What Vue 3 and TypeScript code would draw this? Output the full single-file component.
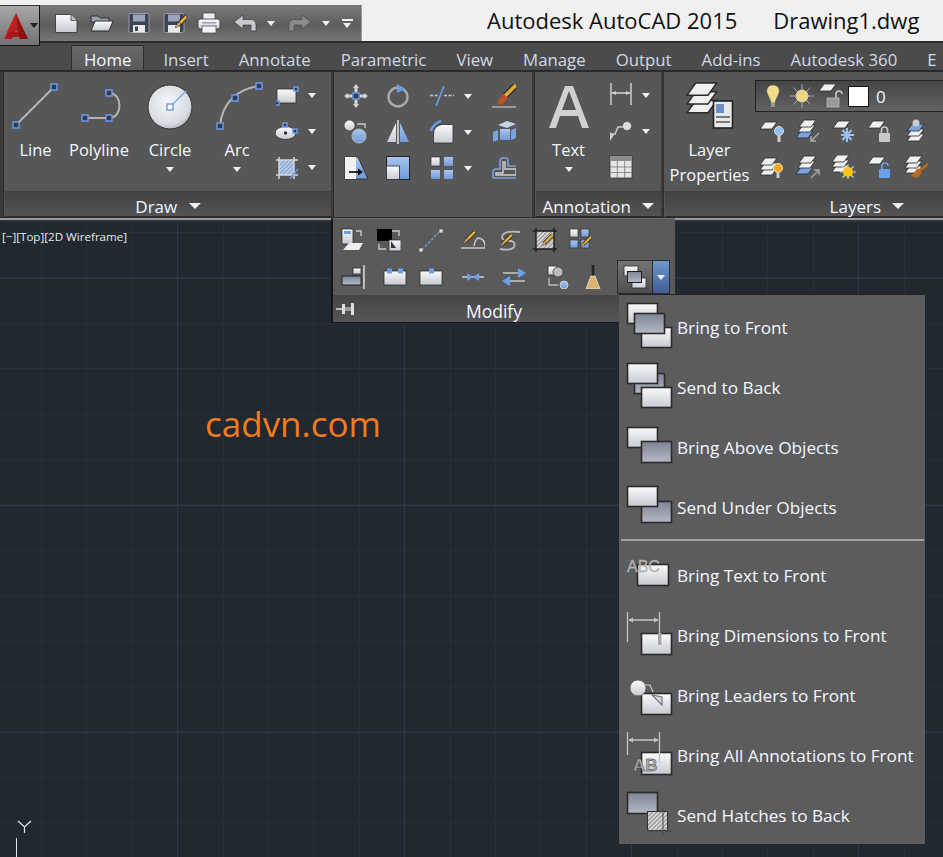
<template>
  <div class="app">
    <svg class="defs" aria-hidden="true">
      <defs>
        <linearGradient id="g-white" x1="0" y1="0" x2="0" y2="1"><stop offset="0" stop-color="#fbfbfb" /><stop offset="1" stop-color="#c6cad2" /></linearGradient>
        <linearGradient id="g-gray" x1="0" y1="0" x2="0" y2="1"><stop offset="0" stop-color="#7d8494" /><stop offset="1" stop-color="#b4b9c4" /></linearGradient>
        <linearGradient id="g-blue" x1="0" y1="0" x2="0" y2="1"><stop offset="0" stop-color="#a9c6ee" /><stop offset="1" stop-color="#6f9ad8" /></linearGradient>
        <linearGradient id="g-red" x1="0" y1="0" x2="1" y2="1"><stop offset="0" stop-color="#e02a26" /><stop offset="1" stop-color="#8e1114" /></linearGradient>
        <radialGradient id="g-disc" cx="0.45" cy="0.4" r="0.65"><stop offset="0" stop-color="#f5f6f8" /><stop offset="0.75" stop-color="#d9dce2" /><stop offset="1" stop-color="#a9adb5" /></radialGradient>
        <pattern id="p-hatch" width="3" height="3" patternUnits="userSpaceOnUse" patternTransform="rotate(45)"><rect width="3" height="3" fill="#e4e4e4" /><rect width="1.4" height="3" fill="#8f8f8f" /></pattern>
        <pattern id="p-hatch-blue" width="3" height="3" patternUnits="userSpaceOnUse" patternTransform="rotate(45)"><rect width="3" height="3" fill="#c3d6f0" /><rect width="1.4" height="3" fill="#7fa0d0" /></pattern>

        <polygon id="pg" points="0,7 12,7 17,0 5,0" />
        <g id="pencil">
          <path d="M21 1 L10 12" class="pen-edge" />
          <path d="M21 1 L10 12" class="pen-body" />
          <path d="M11 9 L13 11 L8 15 L7 14 Z" fill="#d9b27a" stroke="#333" stroke-width=".6" />
        </g>

        <symbol id="i-new" viewBox="0 0 24 24"><path d="M1.5 3.5 H17 L23 9.5 V21.5 H1.5 Z" class="w" /><path d="M17 3.5 V9.5 H23" fill="#bbb" stroke="#333" stroke-width=".7" /></symbol>
        <symbol id="i-open" viewBox="0 0 24 24"><path d="M1 5 H8 L10 7 H19 V11 H1 Z" fill="#9aa0ac" stroke="#2f2f2f" /><path d="M1 20 L5 10 H23 L19 20 Z" fill="url(#g-white)" stroke="#2f2f2f" /></symbol>
        <symbol id="i-save" viewBox="0 0 24 24"><rect x="2" y="2.5" width="20" height="19" rx="1.5" fill="#3c4454" stroke="#aab" stroke-width=".8" /><rect x="6" y="3.5" width="12" height="7" fill="#9aa6bd" /><rect x="6" y="14" width="12" height="7.5" fill="#e9e9e9" /><rect x="8" y="15.5" width="3" height="4.5" fill="#444" /></symbol>
        <symbol id="i-saveas" viewBox="0 0 24 24"><rect x="2" y="2.5" width="20" height="19" rx="1.5" fill="#3c4454" stroke="#aab" stroke-width=".8" /><rect x="6" y="3.5" width="12" height="7" fill="#9aa6bd" /><rect x="6" y="14" width="12" height="7.5" fill="#e9e9e9" /><use href="#pencil" transform="translate(6 2)" /></symbol>
        <symbol id="i-print" viewBox="0 0 24 24"><rect x="6" y="2" width="12" height="8" fill="#eee" stroke="#444" stroke-width=".7" /><rect x="1" y="8" width="22" height="10" rx="2.5" fill="url(#g-white)" stroke="#333" stroke-width=".8" /><rect x="5" y="15" width="14" height="7" fill="#f4f4f4" stroke="#444" stroke-width=".7" /><rect x="5" y="11" width="14" height="1.5" fill="#8ea4c6" /></symbol>
        <symbol id="i-undo" viewBox="0 0 24 24"><path d="M1 11 L10 4 V8.5 H18 Q23 8.5 23 14 V20 H18 V14 H10 V18 Z" fill="#c6c8cc" stroke="#3a3a3a" stroke-width=".7" /></symbol>
        <symbol id="i-redo" viewBox="0 0 24 24"><path d="M23 11 L14 4 V8.5 H6 Q1 8.5 1 14 V20 H6 V14 H14 V18 Z" fill="#8a8a8a" stroke="#4a4a4a" stroke-width=".7" /></symbol>

        <symbol id="d-rect" viewBox="0 0 24 24"><rect x="1" y="6" width="19" height="14" class="w" /><rect x="18" y="4" width="4" height="4" class="nd" /><rect x="-1" y="18" width="4" height="4" class="nd" /></symbol>
        <symbol id="d-ellipse" viewBox="0 0 24 24"><ellipse cx="9.5" cy="14" rx="10.5" ry="6.5" class="w" /><circle cx="9.5" cy="14" r="1.7" fill="#333" /><rect x="7" y="4" width="4" height="4" class="nd" /><rect x="17" y="10" width="4" height="4" class="nd" /></symbol>
        <symbol id="d-hatch" viewBox="0 0 24 24"><rect x="3" y="5" width="15" height="15" fill="url(#p-hatch-blue)" /><path d="M0 5 H22 M0 20 H22 M3 2 V24 M18 2 V24" stroke="#d6d6d6" stroke-width="1.5" fill="none" /><path d="M14 24 L22 14" stroke="#6a9be8" stroke-width="1.4" /></symbol>

        <symbol id="m-move" viewBox="0 0 24 24"><path d="M12 0 L15 4 H13.5 V8 H10.5 V4 H9 Z M12 24 L15 20 H13.5 V16 H10.5 V20 H9 Z M0 12 L4 9 V10.5 H8 V13.5 H4 V15 Z M24 12 L20 9 V10.5 H16 V13.5 H20 V15 Z" fill="#d5d5d5" /><rect x="9" y="9" width="6" height="6" class="nd" /></symbol>
        <symbol id="m-rotate" viewBox="0 0 24 24"><circle cx="12" cy="13" r="9.5" fill="none" stroke="#a9a9a9" stroke-width="2.4" /><path d="M11 0 L19 5 L11 9 Z" fill="#6aa0ea" /></symbol>
        <symbol id="m-trim" viewBox="0 0 24 24"><path d="M0 11.5 H8 M14 11.5 H24" stroke="#b9c4d6" stroke-width="1.4" stroke-dasharray="3 1.5" /><path d="M6 22 L14 2" stroke="#6a9be8" stroke-width="1.8" /></symbol>
        <symbol id="m-brush" viewBox="0 0 24 24"><path d="M0 23 H24" stroke="#ddd" stroke-width="1" /><path d="M24 1 L13 12" stroke="#2d2d2d" stroke-width="6" /><path d="M24 1 L13 12" stroke="#e4ac2e" stroke-width="3.6" /><path d="M11 10 L16 14 L10 21 L5 19 Z" fill="#c0511f" /></symbol>
        <symbol id="m-copy" viewBox="0 0 24 24"><circle cx="5.5" cy="5.5" r="5" fill="url(#g-white)" /><circle cx="15" cy="16" r="7" fill="url(#g-blue)" stroke="#bbb" /><path d="M13 4 H21 V8" fill="none" stroke="#ccc" stroke-width="1.3" /></symbol>
        <symbol id="m-mirror" viewBox="0 0 24 24"><polygon points="10,3 10,22 1,22" fill="url(#g-white)" /><polygon points="14,3 14,22 23,22" fill="url(#g-blue)" /><path d="M12 0 V24" stroke="#ddd" stroke-width="1.6" /></symbol>
        <symbol id="m-fillet" viewBox="0 0 24 24"><path d="M3.5 23 V14 Q3.5 6 12 4.5 H23 V23 Z" class="w" /><path d="M1 11 Q3 4 11 1" fill="none" stroke="#6aa0ea" stroke-width="2.4" /></symbol>
        <symbol id="m-explode" viewBox="0 0 24 24"><polygon points="1,12 6,10 6,20 1,22" fill="#7aa3dc" /><polygon points="6,5 15,1 24,4 15,8" fill="#c7d6ec" /><rect x="8" y="9" width="10" height="11" fill="url(#g-blue)" /><polygon points="19,10 24,8 24,18 19,20" fill="#7aa3dc" /></symbol>
        <symbol id="m-stretch" viewBox="0 0 24 24"><polygon points="1,1 14,1 24,23 1,23" fill="url(#g-blue)" stroke="#222" stroke-width=".8" /><rect x="1" y="1" width="11" height="22" fill="#f2f2f2" /><path d="M5 16 H16" stroke="#000" stroke-width="1.6" /><path d="M14 12.5 L19 16 L14 19.5 Z" fill="#000" /></symbol>
        <symbol id="m-scale" viewBox="0 0 24 24"><rect x="0.5" y="0.5" width="23" height="23" fill="url(#g-blue)" stroke="#222" /><rect x="0.5" y="10" width="13" height="13.5" class="w" /></symbol>
        <symbol id="m-array" viewBox="0 0 24 24"><rect x="1" y="1" width="9" height="9" fill="url(#g-white)" stroke="#333" stroke-width=".7" /><rect x="14" y="1" width="9" height="9" fill="url(#g-blue)" /><rect x="1" y="14" width="9" height="9" fill="url(#g-blue)" /><rect x="14" y="14" width="9" height="9" fill="url(#g-blue)" /></symbol>
        <symbol id="m-offset" viewBox="0 0 24 24"><path d="M1 22 V16 Q1 13 4 13 H8 V5 Q8 2 11 2 H14 Q16 2 16 5 V10 H24 M1 22 H24" fill="none" stroke="#7aa3dc" stroke-width="1.6" /><path d="M4 19 V17 H11 V6 H13 V13 H24 V19 Z" fill="none" stroke="#d0d0d0" stroke-width="1.4" /></symbol>

        <symbol id="x-edit" viewBox="0 0 24 24"><rect x="1" y="1" width="11" height="15" class="w" /><rect x="3" y="3" width="7" height="3" fill="#6aa0ea" /><polygon points="2,22 8,15 22,15 18,22" fill="#eee" /><path d="M15 3 H20 V8" fill="none" stroke="#ccc" stroke-width="1.3" /></symbol>
        <symbol id="x-match" viewBox="0 0 24 24"><rect x="0" y="1" width="15" height="12" fill="#000" /><rect x="12" y="12" width="12" height="11" class="w" /><path d="M14 13 L19 20 H14 Z" fill="#333" /><path d="M15 3 H22 V8 M2 16 V21 H9" fill="none" stroke="#ccc" stroke-width="1.3" /></symbol>
        <symbol id="x-line" viewBox="0 0 24 24"><path d="M3 22 L21 3" stroke="#6a9be8" stroke-width="1.4" stroke-dasharray="3 1.5" /><rect x="0" y="20" width="4" height="4" fill="#ddd" stroke="#444" stroke-width=".6" /><rect x="20" y="1" width="4" height="4" fill="#ddd" stroke="#444" stroke-width=".6" /></symbol>
        <symbol id="x-cloud" viewBox="0 0 24 24"><path d="M2 20 H24 Q25 11 17 10 Q14 12 13 18 M2 20 H0" fill="none" stroke="#c8c8c8" stroke-width="1.5" /><use href="#pencil" transform="translate(-3 3) scale(.8)" /></symbol>
        <symbol id="x-spline" viewBox="0 0 24 24"><path d="M23 4 Q6 2 5 9 Q5 13 14 13 Q19 14 17 19 Q14 23 3 21" fill="none" stroke="#b9b9b9" stroke-width="1.8" /><use href="#pencil" transform="translate(-2 6) scale(.8)" /></symbol>
        <symbol id="x-hatch" viewBox="0 0 24 24"><rect x="3" y="3" width="18" height="18" fill="url(#p-hatch)" /><path d="M0 3 H24 M0 21 H24 M3 0 V24 M21 0 V24" stroke="#1b1b1b" stroke-width="1.4" /><use href="#pencil" transform="translate(3 6) scale(.8)" /></symbol>
        <symbol id="x-array" viewBox="0 0 24 24"><rect x="1" y="1" width="8" height="8" fill="url(#g-white)" stroke="#333" stroke-width=".7" /><rect x="12" y="1" width="8" height="8" fill="url(#g-blue)" stroke="#333" stroke-width=".7" /><rect x="1" y="12" width="8" height="8" fill="url(#g-blue)" stroke="#333" stroke-width=".7" /><rect x="12" y="12" width="8" height="8" fill="url(#g-blue)" stroke="#333" stroke-width=".7" /><use href="#pencil" transform="translate(7 8) scale(.72)" /></symbol>
        <symbol id="x-align" viewBox="0 0 24 24"><rect x="12" y="3" width="8" height="6" class="w" /><rect x="1" y="11" width="19" height="9" fill="url(#g-gray)" stroke="#222" stroke-width="1" /><path d="M23 0 V24" stroke="#eee" stroke-width="1.3" /></symbol>
        <symbol id="x-break2" viewBox="0 0 24 24"><rect x="1" y="6" width="22" height="14" class="w" /><rect x="4" y="3.5" width="5" height="5" fill="#6aa0ea" /><rect x="15" y="3.5" width="5" height="5" fill="#6aa0ea" /></symbol>
        <symbol id="x-break1" viewBox="0 0 24 24"><rect x="1" y="6" width="22" height="14" class="w" /><rect x="10" y="3.5" width="5" height="5" fill="#6aa0ea" /></symbol>
        <symbol id="x-join" viewBox="0 0 24 24"><path d="M1 12 H23" stroke="#c8c8c8" stroke-width="1.6" /><path d="M6 8 L12 12 L6 16 Z M18 8 L12 12 L18 16 Z" fill="#6aa0ea" /></symbol>
        <symbol id="x-swap" viewBox="0 0 24 24"><path d="M1 8 H18 M23 16 H6" stroke="#c8c8c8" stroke-width="1.6" /><path d="M16 3 L24 8 L16 13 Z M8 11 L0 16 L8 21 Z" fill="#6aa0ea" /></symbol>
        <symbol id="x-order" viewBox="0 0 24 24"><rect x="3" y="1" width="9" height="9" class="w" /><circle cx="13" cy="7" r="5" fill="#bbb" stroke="#333" stroke-width=".7" /><circle cx="19" cy="20" r="4" fill="url(#g-blue)" stroke="#ddd" stroke-width=".8" /><path d="M4 13 V20 H13" fill="none" stroke="#bbb" stroke-width="1.3" /></symbol>
        <symbol id="x-broom" viewBox="0 0 24 24"><path d="M12 0 V12" stroke="#222" stroke-width="2.6" /><path d="M10 11 H14 L19 24 H5 Z" fill="#dcb36a" stroke="#e8e8e8" stroke-width=".8" /></symbol>
        <symbol id="x-order-btn" viewBox="0 0 24 24"><rect x="1" y="1" width="14" height="10" class="w" /><rect x="9" y="13" width="14" height="10" class="w" /><rect x="4.5" y="6.5" width="14" height="11" fill="url(#g-gray)" stroke="#222" /></symbol>

        <symbol id="a-dim" viewBox="0 0 24 24"><path d="M2 0 V22 M22 0 V22 M3 10 H21" fill="none" stroke="#d5d5d5" stroke-width="1.4" /><path d="M3 10 L7 8 V12 Z M21 10 L17 8 V12 Z" fill="#d5d5d5" /></symbol>
        <symbol id="a-leader" viewBox="0 0 24 24"><circle cx="18" cy="7" r="4.5" fill="#ddd" stroke="#444" stroke-width=".6" /><path d="M14 8 H9 L6 15 H3" fill="none" stroke="#ccc" stroke-width="1.6" /><path d="M1 13 L5 16 L1 22 Z" fill="#ccc" /></symbol>
        <symbol id="a-table" viewBox="0 0 24 24"><rect x="1" y="1" width="22" height="22" fill="#e6e6e6" stroke="#333" stroke-width=".8" /><rect x="1" y="1" width="22" height="5" fill="#8c8c8c" /><path d="M8.3 6 V23 M15.7 6 V23 M1 12 H23 M1 17.5 H23" stroke="#777" stroke-width=".8" /></symbol>

        <symbol id="l-bulb" viewBox="0 0 24 24"><path d="M12 1 C7 1 5 5 6 9 C7 12 9.500 15 10 19 H14 C14.500 15 17 12 18 9 C19 5 17 1 12 1 Z" fill="#f3dc8c" stroke="#555" stroke-width=".6" /><rect x="10" y="19" width="4" height="4" fill="#999" /></symbol>
        <symbol id="l-sun" viewBox="0 0 24 24"><path d="M12 0 V24 M0 12 H24 M3.5 3.5 L20.5 20.5 M20.5 3.5 L3.5 20.5" stroke="#aaa" stroke-width="1" /><circle cx="12" cy="12" r="6" fill="#f0d67a" stroke="#d5d5d5" /></symbol>
        <symbol id="l-unlock" viewBox="0 0 24 24"><use href="#pg" class="sheet" x="0" y="0" /><rect x="8" y="14" width="12" height="9" fill="#9a9a9a" stroke="#ccc" stroke-width=".6" /><path d="M17 14 V10 Q17 7 20 7 Q23 7 23 10" fill="none" stroke="#c8c8c8" stroke-width="1.6" /></symbol>

        <g id="stack"><use href="#pg" class="sheet" y="10" /><use href="#pg" class="sheet" y="5" /><use href="#pg" class="sheet" y="0" /></g>
        <symbol id="l-iso" viewBox="0 0 24 24"><use href="#pg" class="sheet" x="0" y="3" /><circle cx="19" cy="12" r="4.5" fill="#8ec0f4" stroke="#ddd" /><rect x="17.5" y="16" width="3" height="7" fill="#ccc" /></symbol>
        <symbol id="l-down" viewBox="0 0 24 24"><use href="#pg" class="bsheet" x="0" y="12" /><use href="#pg" class="sheet" x="2" y="6" /><use href="#pg" class="sheet" x="3" y="1" /><path d="M23 14 L15 22 M15 17 V22 H20" fill="none" stroke="#aaa" stroke-width="1.4" /></symbol>
        <symbol id="l-freeze" viewBox="0 0 24 24"><use href="#pg" class="sheet" x="1" y="2" /><path d="M15 9 V23 M9 16 H22 M10.5 11 L19.5 21 M19.5 11 L10.5 21" stroke="#9ac0f0" stroke-width="2" /></symbol>
        <symbol id="l-lock" viewBox="0 0 24 24"><use href="#pg" class="sheet" x="0" y="2" /><rect x="11" y="14" width="11" height="9" rx="1" fill="#c8c8c8" /><path d="M13.5 14 V11 Q13.5 8 16.5 8 Q19.5 8 19.5 11 V14" fill="none" stroke="#c8c8c8" stroke-width="1.6" /></symbol>
        <symbol id="l-ball" viewBox="0 0 24 24"><use href="#pg" class="sheet" x="3" y="15" /><use href="#pg" class="sheet" x="3" y="10" /><use href="#pg" class="bsheet" x="3" y="5" /><circle cx="12" cy="4" r="3.5" fill="#ccc" /></symbol>
        <symbol id="l-iso2" viewBox="0 0 24 24"><use href="#stack" transform="translate(0 3)" /><circle cx="18" cy="13" r="4.5" fill="#f2a623" stroke="#ffdf9a" /><rect x="16.5" y="17" width="3" height="6" fill="#ccc" /></symbol>
        <symbol id="l-up" viewBox="0 0 24 24"><use href="#pg" class="bsheet" x="0" y="12" /><use href="#pg" class="sheet" x="2" y="6" /><use href="#pg" class="sheet" x="3" y="1" /><path d="M15 23 L23 15 M18 15 H23 V20" fill="none" stroke="#aaa" stroke-width="1.4" /></symbol>
        <symbol id="l-thaw" viewBox="0 0 24 24"><use href="#stack" /><path d="M16 9 V25 M8 17 H24 M10.5 11.5 L21.5 22.5 M21.5 11.5 L10.5 22.5" stroke="#cfcfcf" stroke-width="1.2" /><circle cx="16" cy="17" r="5" fill="#f6c612" /></symbol>
        <symbol id="l-unlock2" viewBox="0 0 24 24"><use href="#pg" class="sheet" x="0" y="2" /><rect x="11" y="14" width="11" height="9" rx="1" fill="#6aa0ea" /><path d="M14 14 V11 Q14 8 17 8 Q20 8 20 11" fill="none" stroke="#6aa0ea" stroke-width="1.6" /></symbol>
        <symbol id="l-merge" viewBox="0 0 24 24"><use href="#stack" transform="translate(1 1)" /><path d="M24 9 L14 17" stroke="#b9691f" stroke-width="2.6" /><path d="M14 13 L18 18 L13 23 L7 21 Z" fill="#b9691f" /></symbol>
      </defs>
    </svg>

    <header class="titlebar">
      <div class="qat">
        <svg class="ic"><use href="#i-new" /></svg>
        <svg class="ic"><use href="#i-open" /></svg>
        <svg class="ic"><use href="#i-save" /></svg>
        <svg class="ic"><use href="#i-saveas" /></svg>
        <svg class="ic"><use href="#i-print" /></svg>
        <svg class="ic"><use href="#i-undo" /></svg>
        <i class="caret"></i>
        <svg class="ic"><use href="#i-redo" /></svg>
        <i class="caret"></i>
        <span class="custom"><i class="caret"></i></span>
      </div>
      <span class="app-name">Autodesk AutoCAD 2015</span>
      <span class="doc-name">Drawing1.dwg</span>
      <button class="app-btn">
        <svg width="26" height="28" viewBox="0 0 26 28">
          <polygon points="13,1 25,27 17,27 13,18 9,27 1,27" fill="url(#g-red)" />
          <polygon points="13,1 9,16 1,27" fill="#c41f1f" />
          <polygon points="6,20 20,20 22,25 4,25" fill="#a81518" />
          <polygon points="13,1 18,14 25,27 17,27" fill="#7e1013" opacity=".75" />
        </svg>
        <i class="caret dark"></i>
      </button>
    </header>

    <nav class="tabs">
      <a v-for="t in tabs" :key="t" class="tab" :class="{ active: t === 'Home' }">{{ t }}</a>
    </nav>

    <section class="ribbon">
      <div class="panel draw">
        <div class="body draw-body">
          <div class="big">
            <svg class="big-ic" viewBox="0 0 48 48"><path d="M4 42 L42 4" stroke="#b5b5b5" stroke-width="2" /><rect x="1" y="39" width="6" height="6" class="nd" /><rect x="39" y="1" width="6" height="6" class="nd" /></svg>
            <span class="lbl">Line</span>
          </div>
          <div class="big">
            <svg class="big-ic" viewBox="0 0 48 48"><path d="M10 35 H34 C48 35 48 10 34 10" fill="none" stroke="#b5b5b5" stroke-width="2" /><rect x="7" y="32" width="6" height="6" class="nd" /><rect x="31" y="32" width="6" height="6" class="nd" /><rect x="31" y="7" width="6" height="6" class="nd" /></svg>
            <span class="lbl">Polyline</span>
          </div>
          <div class="big">
            <svg class="big-ic" viewBox="0 0 48 48"><circle cx="24" cy="24" r="22" fill="url(#g-disc)" stroke="#333" stroke-width="1" /><path d="M24 24 L40 8" stroke="#7eb0f0" stroke-width="1.6" /><rect x="21" y="21" width="6" height="6" fill="#fff" stroke="#6a9be8" stroke-width="1.4" /></svg>
            <span class="lbl">Circle</span>
            <i class="caret"></i>
          </div>
          <div class="big">
            <svg class="big-ic" viewBox="0 0 48 48"><path d="M7 43 C9 20 24 6 46 3" fill="none" stroke="#b5b5b5" stroke-width="2" /><rect x="4" y="40" width="6" height="6" class="nd" /><rect x="19" y="12" width="6" height="6" class="nd" /><rect x="43" y="0" width="6" height="6" class="nd" /></svg>
            <span class="lbl">Arc</span>
            <i class="caret"></i>
          </div>
          <div class="small-col">
            <div class="small"><svg class="ic"><use href="#d-rect" /></svg><i class="caret"></i></div>
            <div class="small"><svg class="ic"><use href="#d-ellipse" /></svg><i class="caret"></i></div>
            <div class="small"><svg class="ic"><use href="#d-hatch" /></svg><i class="caret"></i></div>
          </div>
        </div>
        <footer class="foot">Draw <i class="caret big-caret"></i></footer>
      </div>

      <div class="panel modify">
        <div class="body modify-body">
          <svg class="ic"><use href="#m-move" /></svg>
          <svg class="ic"><use href="#m-rotate" /></svg>
          <div class="small"><svg class="ic"><use href="#m-trim" /></svg><i class="caret"></i></div>
          <svg class="ic"><use href="#m-brush" /></svg>
          <svg class="ic"><use href="#m-copy" /></svg>
          <svg class="ic"><use href="#m-mirror" /></svg>
          <div class="small"><svg class="ic"><use href="#m-fillet" /></svg><i class="caret"></i></div>
          <svg class="ic"><use href="#m-explode" /></svg>
          <svg class="ic"><use href="#m-stretch" /></svg>
          <svg class="ic"><use href="#m-scale" /></svg>
          <div class="small"><svg class="ic"><use href="#m-array" /></svg><i class="caret"></i></div>
          <svg class="ic"><use href="#m-offset" /></svg>
        </div>
      </div>

      <div class="panel annotation">
        <div class="body annotation-body">
          <div class="big">
            <svg class="big-ic" viewBox="0 0 48 48"><path d="M20 3 H28 L44 45 H37 L33 33 H15 L11 45 H4 Z M17 27 H31 L24 8 Z" fill="#d0d0d0" fill-rule="evenodd" /></svg>
            <span class="lbl">Text</span>
            <i class="caret"></i>
          </div>
          <div class="small-col">
            <div class="small"><svg class="ic"><use href="#a-dim" /></svg><i class="caret"></i></div>
            <div class="small"><svg class="ic"><use href="#a-leader" /></svg><i class="caret"></i></div>
            <div class="small"><svg class="ic"><use href="#a-table" /></svg></div>
          </div>
        </div>
        <footer class="foot">Annotation <i class="caret big-caret"></i></footer>
      </div>

      <div class="panel layers">
        <div class="body layers-body">
          <div class="big">
            <svg class="big-ic" viewBox="0 0 48 48">
              <g transform="translate(1 0) scale(1.75)"><use href="#pg" class="sheet" y="10" /><use href="#pg" class="sheet" y="5" /><use href="#pg" class="sheet" y="0" /></g>
              <rect x="27.5" y="18" width="19" height="27" fill="#e8e8e8" stroke="#222" stroke-width="1.6" />
              <rect x="30" y="21" width="8" height="9" fill="#6a8fc8" />
              <path d="M30 34 H44 M30 39 H44" stroke="#555" stroke-width="1.4" />
            </svg>
            <span class="lbl two">Layer<br />Properties</span>
          </div>
          <div class="layer-tools">
            <div class="combo">
              <svg class="ic"><use href="#l-bulb" /></svg>
              <svg class="ic"><use href="#l-sun" /></svg>
              <svg class="ic"><use href="#l-unlock" /></svg>
              <span class="swatch"></span>
              <span class="combo-val">0</span>
            </div>
            <div class="layer-row">
              <svg class="ic"><use href="#l-iso" /></svg>
              <svg class="ic"><use href="#l-down" /></svg>
              <svg class="ic"><use href="#l-freeze" /></svg>
              <svg class="ic"><use href="#l-lock" /></svg>
              <svg class="ic"><use href="#l-ball" /></svg>
            </div>
            <div class="layer-row">
              <svg class="ic"><use href="#l-iso2" /></svg>
              <svg class="ic"><use href="#l-up" /></svg>
              <svg class="ic"><use href="#l-thaw" /></svg>
              <svg class="ic"><use href="#l-unlock2" /></svg>
              <svg class="ic"><use href="#l-merge" /></svg>
            </div>
          </div>
        </div>
        <footer class="foot">Layers <i class="caret big-caret"></i></footer>
      </div>
    </section>

    <div class="divider"></div>

    <main class="canvas">
      <span class="vp-label">[−][Top][2D Wireframe]</span>
      <span class="watermark">cadvn.com</span>
      <svg class="ucs" width="24" height="44" viewBox="0 0 24 44">
        <path d="M2 8 L8.500 14 L15 8 M8.500 14 V20" fill="none" stroke="#e6e6e6" stroke-width="1.200" />
        <path d="M0.500 25 V44" stroke="#e6e6e6" stroke-width="1" />
      </svg>
    </main>

    <div class="slideout">
      <div class="slide-grid">
        <svg class="ic"><use href="#x-edit" /></svg>
        <svg class="ic"><use href="#x-match" /></svg>
        <svg class="ic"><use href="#x-line" /></svg>
        <svg class="ic"><use href="#x-cloud" /></svg>
        <svg class="ic"><use href="#x-spline" /></svg>
        <svg class="ic"><use href="#x-hatch" /></svg>
        <svg class="ic"><use href="#x-array" /></svg>
      </div>
      <div class="slide-row">
        <svg class="ic"><use href="#x-align" /></svg>
        <svg class="ic"><use href="#x-break2" /></svg>
        <svg class="ic"><use href="#x-break1" /></svg>
        <svg class="ic"><use href="#x-join" /></svg>
        <svg class="ic"><use href="#x-swap" /></svg>
        <svg class="ic"><use href="#x-order" /></svg>
        <svg class="ic"><use href="#x-broom" /></svg>
        <div class="split">
          <span class="split-main"><svg class="ic"><use href="#x-order-btn" /></svg></span>
          <span class="split-arrow"><i class="caret"></i></span>
        </div>
      </div>
      <footer class="slide-foot">
        <svg class="pin" width="20" height="14" viewBox="0 0 20 14"><path d="M0 7 H6" stroke="#ddd" stroke-width="1.6" /><rect x="6" y="2" width="3" height="10" fill="#ddd" /><rect x="9" y="5" width="6" height="4" fill="#999" /><rect x="15" y="1" width="3" height="12" fill="#ddd" /></svg>
        <span>Modify</span>
      </footer>
    </div>

    <div class="menu">
      <div class="menu-item">
        <svg class="menu-ic" viewBox="0 0 46 50"><rect x="1.500" y="0.500" width="30" height="20" class="s-w" /><rect x="15.500" y="24.500" width="30" height="20" class="s-w" /><rect x="8.500" y="10.500" width="30" height="20" class="s-g" /></svg>
        <span>Bring to Front</span>
      </div>
      <div class="menu-item">
        <svg class="menu-ic" viewBox="0 0 46 50"><rect x="8.500" y="10.500" width="30" height="20" class="s-g" /><rect x="1.500" y="0.500" width="30" height="20" class="s-w" /><rect x="15.500" y="24.500" width="30" height="20" class="s-w" /></svg>
        <span>Send to Back</span>
      </div>
      <div class="menu-item">
        <svg class="menu-ic" viewBox="0 0 46 50"><rect x="1.500" y="4.500" width="30" height="20" class="s-w" /><rect x="15.500" y="18.500" width="30" height="21" class="s-g" /></svg>
        <span>Bring Above Objects</span>
      </div>
      <div class="menu-item">
        <svg class="menu-ic" viewBox="0 0 46 50"><rect x="15.500" y="18.500" width="30" height="21" class="s-g" /><rect x="1.500" y="3.500" width="30" height="20" class="s-w" /></svg>
        <span>Send Under Objects</span>
      </div>
      <div class="menu-sep"></div>
      <div class="menu-item">
        <svg class="menu-ic" viewBox="0 0 46 50"><rect x="11.500" y="13.500" width="31" height="21" class="s-w" /><text x="1" y="21" class="ic-text abc">ABC</text></svg>
        <span>Bring Text to Front</span>
      </div>
      <div class="menu-item">
        <svg class="menu-ic" viewBox="0 0 46 50"><rect x="15.500" y="22.500" width="30" height="21" class="s-w" /><path d="M1.500 1 V31 M33.500 1 V32 M3 9 H32" fill="none" stroke="#c4c4c4" stroke-width="1.300" /><path d="M2.500 9 L7 6.500 V11.500 Z M32.500 9 L28 6.500 V11.500 Z" fill="#c4c4c4" /><rect x="32" y="22" width="3.500" height="12" fill="#a8a8a8" /></svg>
        <span>Bring Dimensions to Front</span>
      </div>
      <div class="menu-item">
        <svg class="menu-ic" viewBox="0 0 46 50"><rect x="15.500" y="22.500" width="30" height="21" class="s-w" /><circle cx="12" cy="17" r="8" fill="url(#g-white)" stroke="#6a6a6a" /><path d="M19 14 H24 L27 21" fill="none" stroke="#ccc" stroke-width="1.200" /><polygon points="26,24 36,26 36,34" fill="#d5d8de" stroke="#777" stroke-width="1.200" /></svg>
        <span>Bring Leaders to Front</span>
      </div>
      <div class="menu-item">
        <svg class="menu-ic" viewBox="0 0 46 50"><rect x="15.500" y="21.500" width="30" height="22" class="s-w" /><path d="M1.500 1 V24 M33.500 1 V32 M3 9 H32" fill="none" stroke="#c4c4c4" stroke-width="1.300" /><path d="M2.500 9 L7 6.500 V11.500 Z M32.500 9 L28 6.500 V11.500 Z" fill="#c4c4c4" /><text x="7" y="40" class="ic-text ab">AB</text></svg>
        <span>Bring All Annotations to Front</span>
      </div>
      <div class="menu-item">
        <svg class="menu-ic" viewBox="0 0 46 50"><rect x="1.500" y="1.500" width="30" height="21" class="s-g flip" /><rect x="21.500" y="20.500" width="20" height="19" fill="url(#p-hatch)" stroke="#333" /><path d="M37 17 V44 M24 40 H46" stroke="#4a4a4a" stroke-width="1" /></svg>
        <span>Send Hatches to Back</span>
      </div>
    </div>
  </div>
</template>

<script setup lang="ts">
const tabs: string[] = ['Home', 'Insert', 'Annotate', 'Parametric', 'View', 'Manage', 'Output', 'Add-ins', 'Autodesk 360', 'E']
</script>

<style>
html,
body {
  margin: 0;
  background: #212830;
}
</style>

<style scoped>
.app {
  position: relative;
  display: flex;
  flex-direction: column;
  width: 943px;
  height: 857px;
  overflow: hidden;
  font-family: 'Open Sans', 'Noto Sans', sans-serif;
  color: #f2f7ff;
  background: #212830;
}

.defs {
  position: absolute;
  width: 0;
  height: 0;
}

.ic {
  display: block;
  width: 24px;
  height: 24px;
  flex: none;
  overflow: visible;
}

.caret {
  display: block;
  flex: none;
  width: 0;
  height: 0;
  border-left: 4px solid transparent;
  border-right: 4px solid transparent;
  border-top: 5px solid #f0f0f0;
}

.caret.dark {
  border-top-color: #222;
}

.big-caret {
  display: inline-block;
  border-left-width: 6px;
  border-right-width: 6px;
  border-top-width: 6px;
  margin-left: 7px;
  vertical-align: 4px;
}

/* title bar */
.titlebar {
  position: relative;
  flex: none;
  display: flex;
  height: 41px;
  background: #f0f0f0;
  color: #111;
  font-size: 22px;
  line-height: 41px;
}

.qat {
  display: grid;
  grid-template-columns: 36px 37px 35px 35px 36px 34px 21px 34px 20px 12px;
  align-items: center;
  box-sizing: border-box;
  width: 362px;
  height: 36px;
  margin-top: 5px;
  padding-left: 54px;
  background: linear-gradient(#7a7a7a, #5d5d5d 55%, #777);
  border-right: 1px solid #9a9a9a;
}

.custom {
  display: block;
  width: 10px;
  border-top: 2px solid #eee;
  padding: 2px 0 0 1px;
}

.app-name {
  margin-left: 125px;
  white-space: nowrap;
}

.doc-name {
  margin-left: 36px;
  white-space: nowrap;
}

.app-btn {
  position: absolute;
  left: 0;
  top: 5px;
  display: flex;
  align-items: center;
  gap: 1px;
  box-sizing: border-box;
  width: 40px;
  height: 41px;
  padding: 0 0 0 3px;
  border: 0;
  border-right: 1px solid #111;
  border-bottom: 1px solid #111;
  border-top: 1px solid #333;
  background: linear-gradient(#a8a8a8, #707070);
  z-index: 2;
}

/* tabs */
.tabs {
  flex: none;
  display: flex;
  align-items: flex-end;
  gap: 30px;
  height: 27px;
  padding-left: 71px;
  white-space: nowrap;
  background: #4b4b4b;
  border-top: 2px solid #2b2b2b;
  border-bottom: 2px solid #2a2a2a;
  font-size: 16.800px;
  color: #cfd9e6;
}

.tab {
  height: 24px;
  line-height: 27px;
}

.tab.active {
  color: #f4f8ff;
  background: linear-gradient(#686868, #5a5a5a);
  padding: 0 12px 0 12px;
  margin-right: -11px;
  border: 1px solid #2d2d2d;
  border-bottom: 0;
  border-radius: 2px 2px 0 0;
}

/* ribbon */
.ribbon {
  flex: none;
  display: flex;
  gap: 2px;
  height: 145px;
  padding-left: 3px;
  background: #3b3b3b;
}

.panel {
  flex: none;
  display: flex;
  flex-direction: column;
  background: #575757;
  border-left: 1px solid #2c2c2c;
  box-sizing: border-box;
}

.body {
  flex: 1;
  min-height: 0;
}

.foot {
  flex: none;
  box-sizing: border-box;
  height: 26px;
  margin-left: 1px;
  padding-top: 3px;
  text-align: center;
  font-size: 17px;
  line-height: 26px;
  background: linear-gradient(#414141, #545454);
  border-bottom: 1px solid #2c2c2c;
}

.big {
  flex: none;
  display: flex;
  flex-direction: column;
  align-items: center;
  padding-top: 11px;
}

.big-ic {
  display: block;
  width: 48px;
  height: 48px;
  overflow: visible;
}

.lbl {
  margin-top: 6px;
  margin-bottom: 5px;
  font-size: 16.500px;
  line-height: 25px;
  white-space: nowrap;
}

.small-col {
  padding-top: 5px;
}

.small {
  display: flex;
  align-items: center;
  height: 36px;
}

.draw {
  width: 328px;
}

.draw-body {
  display: grid;
  grid-template-columns: 63px 64px 78px 56px auto;
}

.draw-body .small-col {
  padding-left: 11px;
}

.draw-body .small .caret {
  margin-left: 8px;
}

.modify {
  width: 199px;
}

.modify-body {
  display: grid;
  grid-template-columns: 42px 44px 62px 24px;
  grid-auto-rows: 36px;
  align-items: center;
  padding: 6px 0 0 10px;
}

.modify-body .caret {
  margin-left: 10px;
}

.annotation {
  width: 127px;
}

.annotation-body {
  display: flex;
}

.annotation-body .big {
  width: 67px;
}

.annotation-body .small-col {
  padding-left: 7px;
}

.annotation-body .small .caret {
  margin-left: 9px;
}

.layers {
  width: 406px;
}

.layers-body {
  display: flex;
}

.layers-body .big {
  width: 91px;
}

.lbl.two {
  text-align: center;
}

.layer-tools {
  flex: none;
  padding-top: 8px;
}

.combo {
  display: flex;
  align-items: center;
  gap: 5px;
  box-sizing: border-box;
  width: 315px;
  height: 32px;
  padding-left: 5px;
  border: 1px solid #222;
  background: linear-gradient(#454545, #626262);
  font-size: 17px;
}

.swatch {
  width: 21px;
  height: 21px;
  background: #fff;
  border: 1px solid #111;
  box-sizing: border-box;
}

.combo-val {
  margin-left: 2px;
}

.layer-row {
  display: flex;
  gap: 12px;
  padding-left: 5px;
  margin-top: 7px;
}

.layer-row + .layer-row {
  margin-top: 12px;
}

.divider {
  flex: none;
  height: 5px;
  box-sizing: border-box;
  border-top: 1px solid #2b2b2b;
  border-bottom: 2px solid #2e333a;
  background: #9a9a9a;
}

/* model space */
.canvas {
  position: relative;
  flex: 1;
  background-color: #212830;
  background-image:
    repeating-linear-gradient(90deg, #2f3748 0 1px, transparent 1px 227px),
    repeating-linear-gradient(180deg, #2f3748 0 1px, transparent 1px 227px),
    repeating-linear-gradient(90deg, #282f3a 0 1px, transparent 1px 45.400px),
    repeating-linear-gradient(180deg, #282f3a 0 1px, transparent 1px 45.400px);
  background-repeat: no-repeat;
  background-position: 177px 0, 0 56px, 41px 0, 0 10px;
}

.vp-label {
  position: absolute;
  left: 2px;
  top: 7px;
  font-size: 11.600px;
  line-height: 16px;
  color: #e8e8e8;
  white-space: nowrap;
}

.watermark {
  position: absolute;
  left: 205px;
  top: 180px;
  font-size: 35px;
  line-height: 44px;
  color: #f47a1e;
}

.ucs {
  position: absolute;
  left: 16px;
  bottom: 0;
}

/* modify slideout */
.slideout {
  position: absolute;
  left: 331px;
  top: 218px;
  box-sizing: border-box;
  width: 344px;
  height: 105px;
  padding-top: 3px;
  background: #5a5a5a;
  border-left: 2px solid #161616;
  border-bottom: 2px solid #161616;
  border-top: 1px solid #6a6a6a;
}

.slide-grid,
.slide-row {
  display: grid;
  align-items: center;
  height: 36px;
  padding-left: 8px;
}

.slide-grid {
  grid-template-columns: 36px 42px 42px 36px 36px 36px 24px;
}

.slide-row {
  grid-template-columns: 42px 36px 42px 41px 43px 36px 36px auto;
  margin-top: 1px;
}

.split {
  display: flex;
  height: 34px;
  border: 1px solid #2d2d2d;
  box-sizing: border-box;
  width: 53px;
}

.split-main {
  display: flex;
  align-items: center;
  justify-content: center;
  width: 34px;
  background: linear-gradient(#747474, #4f4f4f);
}

.split-arrow {
  flex: 1;
  display: flex;
  align-items: center;
  justify-content: center;
  background: linear-gradient(#6f96d0, #3f5f95);
  border-left: 1px solid #2d2d2d;
}

.slide-foot {
  position: relative;
  box-sizing: border-box;
  height: 27px;
  padding-top: 3px;
  padding-right: 20px;
  text-align: center;
  font-size: 17.500px;
  line-height: 26px;
  background: linear-gradient(#454545, #565656);
}

.pin {
  position: absolute;
  left: 3px;
  top: 7px;
}

/* draw order menu */
.menu {
  position: absolute;
  left: 619px;
  top: 294px;
  box-sizing: border-box;
  width: 306px;
  height: 550px;
  padding-top: 3px;
  overflow: hidden;
  background: #5c5c5c;
  border-top: 1px solid #222;
  font-size: 17.200px;
  color: #f2f7ff;
}

.menu-item {
  display: flex;
  align-items: center;
  height: 60px;
  padding-left: 7px;
  white-space: nowrap;
}

.menu-item span {
  margin-top: -2px;
}

.menu-ic {
  flex: none;
  width: 46px;
  height: 50px;
  margin-right: 5px;
  overflow: visible;
}

.menu-sep {
  height: 2px;
  margin: 1px 1px 5px 2px;
  background: #a2a2a2;
}

.ic-text {
  font-family: 'Liberation Sans', sans-serif;
}

.abc {
  font-size: 16px;
  fill: #b4b4b4;
  stroke: #b4b4b4;
  stroke-width: 0.300;
}

.ab {
  font-size: 17px;
  font-weight: 700;
  fill: #a9a9a9;
  stroke: #3c3c3c;
  stroke-width: 0.400;
}

/* svg parts */
.nd {
  fill: #2e3b50;
  stroke: #6a9be8;
  stroke-width: 1.500;
}

.w {
  fill: url(#g-white);
  stroke: #2d2d2d;
  stroke-width: 0.800;
}

.s-w {
  fill: url(#g-white);
  stroke: #2a2a2a;
  stroke-width: 1.600;
}

.s-g {
  fill: url(#g-gray);
  stroke: #2a2a2a;
  stroke-width: 1.600;
}

.sheet {
  fill: #f0f0f0;
  stroke: #2a2a2a;
  stroke-width: 0.800;
}

.bsheet {
  fill: #7aa3dc;
  stroke: #1e2d4a;
  stroke-width: 0.800;
}

.pen-edge {
  stroke: #2a2a2a;
  stroke-width: 5;
  fill: none;
}

.pen-body {
  stroke: #e8b030;
  stroke-width: 3;
  fill: none;
}
</style>
